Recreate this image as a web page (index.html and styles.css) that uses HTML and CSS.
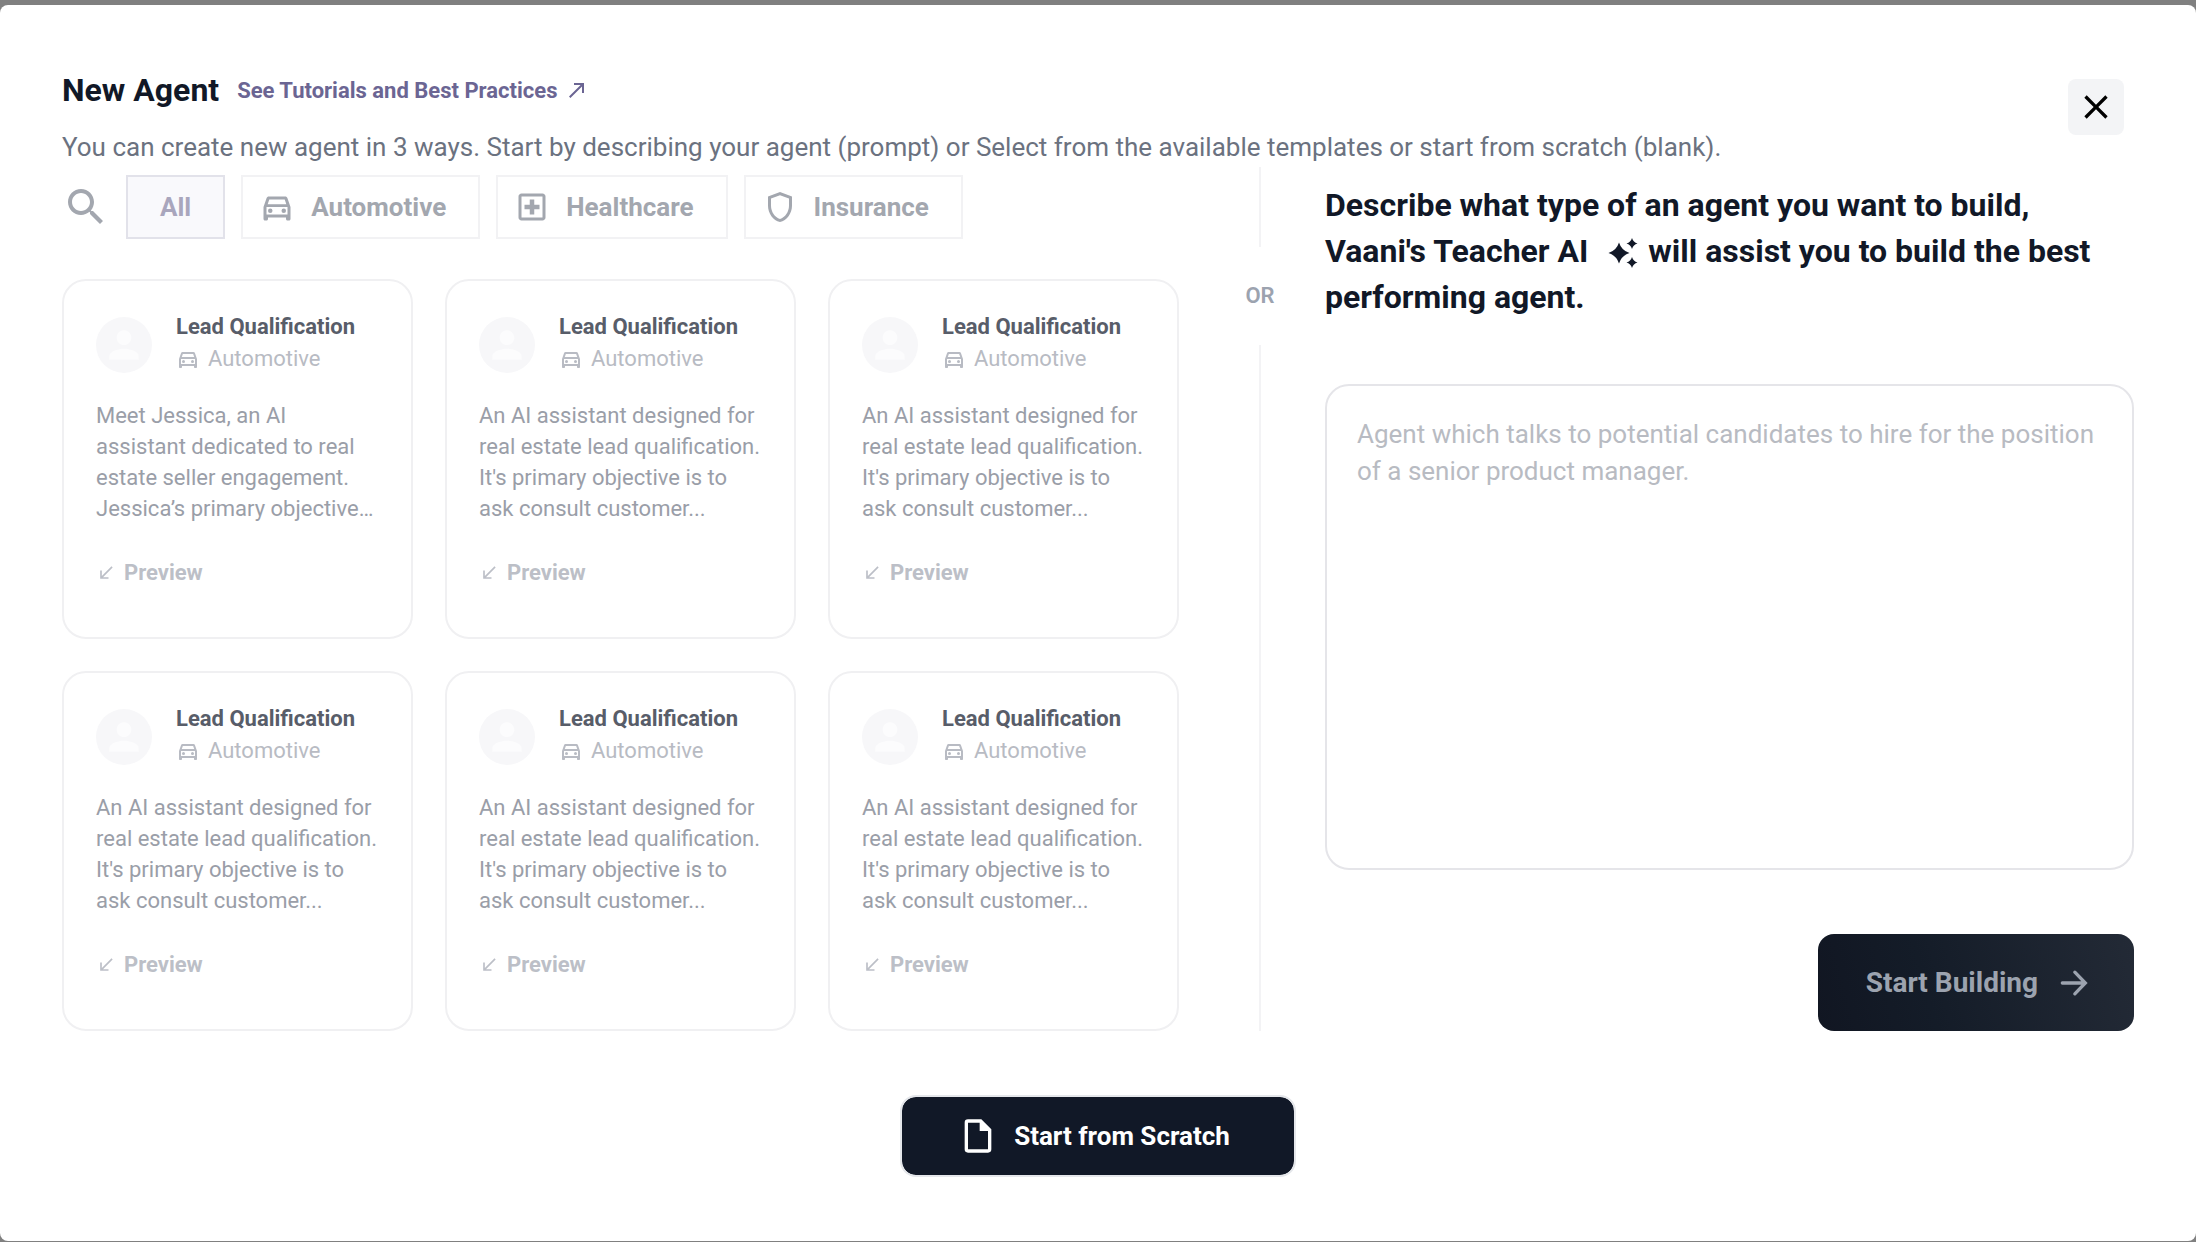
FILE: index.html
```html
<!DOCTYPE html>
<html lang="en">
<head>
<meta charset="utf-8">
<meta name="viewport" content="width=device-width, initial-scale=1">
<title>New Agent</title>
<link rel="stylesheet" href="styles.css">
</head>
<body>
<svg class="sprite" aria-hidden="true">
  <symbol id="car" viewBox="0 0 24 24"><path d="M18.92 6.01C18.72 5.42 18.16 5 17.5 5h-11c-.66 0-1.21.42-1.42 1.01L3 12v8c0 .55.45 1 1 1h1c.55 0 1-.45 1-1v-1h12v1c0 .55.45 1 1 1h1c.55 0 1-.45 1-1v-8zM6.85 7h10.29l1.08 3.11H5.77zM19 17H5v-5h14z"/><circle cx="7.5" cy="14.5" r="1.5"/><circle cx="16.5" cy="14.5" r="1.5"/></symbol>
  <symbol id="person" viewBox="0 0 24 24"><path d="M12 12c2.21 0 4-1.79 4-4s-1.79-4-4-4-4 1.79-4 4 1.79 4 4 4zm0 2c-2.67 0-8 1.34-8 4v2h16v-2c0-2.66-5.33-4-8-4z"/></symbol>
  <symbol id="expand" viewBox="0 0 24 24"><path d="M20 5.41 18.59 4 7 15.59V9H5v10h10v-2H8.41z"/></symbol>
</svg>

<main class="dialog" role="dialog" aria-labelledby="dialog-title">
  <header class="header">
    <div class="heading">
      <div class="title-row">
        <h1 class="title" id="dialog-title">New Agent</h1>
        <a class="tutorials" href="#tutorials">See Tutorials and Best Practices
          <svg class="icon-24" viewBox="0 0 24 24" aria-hidden="true"><path d="M9 5v2h6.59L4 18.59 5.41 20 17 8.41V15h2V5z"/></svg>
        </a>
      </div>
      <p class="subtitle">You can create new agent in 3 ways. Start by describing your agent (prompt) or Select from the available templates or start from scratch (blank).</p>
    </div>
    <button class="close" type="button" aria-label="Close">
      <svg class="icon-40" viewBox="0 0 24 24" aria-hidden="true"><path d="M19 6.41 17.59 5 12 10.59 6.41 5 5 6.41 10.59 12 5 17.59 6.41 19 12 13.41 17.59 19 19 17.59 13.41 12z"/></svg>
    </button>
  </header>

  <div class="body">
    <section class="templates" aria-label="Templates">
      <div class="filters">
        <button class="search" type="button" aria-label="Search templates">
          <svg class="icon-48" viewBox="0 0 24 24" aria-hidden="true"><path d="M15.5 14h-.79l-.28-.27C15.41 12.59 16 11.11 16 9.5 16 5.91 13.09 3 9.5 3S3 5.91 3 9.5 5.91 16 9.5 16c1.61 0 3.09-.59 4.23-1.57l.27.28v.79l5 4.99L20.49 19zm-6 0C7.01 14 5 11.99 5 9.5S7.01 5 9.5 5 14 7.01 14 9.5 11.99 14 9.5 14z"/></svg>
        </button>
        <button class="filter filter-active" type="button" aria-pressed="true">All</button>
        <button class="filter filter-icon" type="button"><svg class="icon-36" aria-hidden="true"><use href="#car"/></svg>Automotive</button>
        <button class="filter filter-icon" type="button"><svg class="icon-36" viewBox="0 0 24 24" aria-hidden="true"><path d="M19 3H5c-1.1 0-2 .9-2 2v14c0 1.1.9 2 2 2h14c1.1 0 2-.9 2-2V5c0-1.1-.9-2-2-2zm0 16H5V5h14zM10.5 17h3v-3.5H17v-3h-3.500V7h-3v3.500H7v3h3.500z"/></svg>Healthcare</button>
        <button class="filter filter-icon" type="button"><svg class="icon-36" viewBox="0 0 24 24" aria-hidden="true"><path d="M12 2 4 5v6.090c0 5.050 3.410 9.760 8 10.910 4.590-1.150 8-5.860 8-10.910V5zm6 9.090c0 4-2.550 7.700-6 8.830-3.450-1.130-6-4.820-6-8.830v-4.700l6-2.250 6 2.250z"/></svg>Insurance</button>
      </div>

      <div class="cards">
        <article class="card">
          <div class="card-head">
            <span class="avatar"><svg class="icon-44" aria-hidden="true"><use href="#person"/></svg></span>
            <div>
              <h2 class="card-title">Lead Qualification</h2>
              <p class="category"><svg class="icon-24" aria-hidden="true"><use href="#car"/></svg>Automotive</p>
            </div>
          </div>
          <p class="description">Meet Jessica, an AI assistant dedicated to real estate seller engagement. Jessica’s primary objective…</p>
          <button class="preview" type="button"><svg class="icon-20" aria-hidden="true"><use href="#expand"/></svg>Preview</button>
        </article>
        <article class="card">
          <div class="card-head">
            <span class="avatar"><svg class="icon-44" aria-hidden="true"><use href="#person"/></svg></span>
            <div>
              <h2 class="card-title">Lead Qualification</h2>
              <p class="category"><svg class="icon-24" aria-hidden="true"><use href="#car"/></svg>Automotive</p>
            </div>
          </div>
          <p class="description">An AI assistant designed for real estate lead qualification. It's primary objective is to ask consult customer...</p>
          <button class="preview" type="button"><svg class="icon-20" aria-hidden="true"><use href="#expand"/></svg>Preview</button>
        </article>
        <article class="card">
          <div class="card-head">
            <span class="avatar"><svg class="icon-44" aria-hidden="true"><use href="#person"/></svg></span>
            <div>
              <h2 class="card-title">Lead Qualification</h2>
              <p class="category"><svg class="icon-24" aria-hidden="true"><use href="#car"/></svg>Automotive</p>
            </div>
          </div>
          <p class="description">An AI assistant designed for real estate lead qualification. It's primary objective is to ask consult customer...</p>
          <button class="preview" type="button"><svg class="icon-20" aria-hidden="true"><use href="#expand"/></svg>Preview</button>
        </article>
        <article class="card">
          <div class="card-head">
            <span class="avatar"><svg class="icon-44" aria-hidden="true"><use href="#person"/></svg></span>
            <div>
              <h2 class="card-title">Lead Qualification</h2>
              <p class="category"><svg class="icon-24" aria-hidden="true"><use href="#car"/></svg>Automotive</p>
            </div>
          </div>
          <p class="description">An AI assistant designed for real estate lead qualification. It's primary objective is to ask consult customer...</p>
          <button class="preview" type="button"><svg class="icon-20" aria-hidden="true"><use href="#expand"/></svg>Preview</button>
        </article>
        <article class="card">
          <div class="card-head">
            <span class="avatar"><svg class="icon-44" aria-hidden="true"><use href="#person"/></svg></span>
            <div>
              <h2 class="card-title">Lead Qualification</h2>
              <p class="category"><svg class="icon-24" aria-hidden="true"><use href="#car"/></svg>Automotive</p>
            </div>
          </div>
          <p class="description">An AI assistant designed for real estate lead qualification. It's primary objective is to ask consult customer...</p>
          <button class="preview" type="button"><svg class="icon-20" aria-hidden="true"><use href="#expand"/></svg>Preview</button>
        </article>
        <article class="card">
          <div class="card-head">
            <span class="avatar"><svg class="icon-44" aria-hidden="true"><use href="#person"/></svg></span>
            <div>
              <h2 class="card-title">Lead Qualification</h2>
              <p class="category"><svg class="icon-24" aria-hidden="true"><use href="#car"/></svg>Automotive</p>
            </div>
          </div>
          <p class="description">An AI assistant designed for real estate lead qualification. It's primary objective is to ask consult customer...</p>
          <button class="preview" type="button"><svg class="icon-20" aria-hidden="true"><use href="#expand"/></svg>Preview</button>
        </article>
      </div>
    </section>

    <div class="divider"><span class="or">OR</span></div>

    <form class="prompt">
      <label class="prompt-label" for="agent-prompt">Describe what type of an agent you want to build, Vaani's Teacher AI <svg class="sparkle" viewBox="0 0 30 30" aria-hidden="true"><path d="M11 4.500Q13.500 12.500 21.500 15 13.500 17.500 11 25.500 8.500 17.500.5 15 8.500 12.500 11 4.500zM24 0Q25.300 4.200 29.500 5.500 25.300 6.800 24 11 22.700 6.800 18.500 5.500 22.700 4.200 24 0zM24 19Q25.300 23.200 29.500 24.500 25.300 25.800 24 30 22.700 25.800 18.500 24.500 22.700 23.200 24 19z"/></svg> will assist you to build the best performing agent.</label>
      <textarea class="prompt-input" id="agent-prompt" placeholder="Agent which talks to potential candidates to hire for the position of a senior product manager."></textarea>
      <button class="build" type="button">Start Building
        <svg class="icon-40 icon-line" viewBox="0 0 24 24" aria-hidden="true"><path d="M5 12h13.500M12.500 5.500 18.800 12l-6.300 6.500"/></svg>
      </button>
    </form>
  </div>

  <button class="scratch" type="button">
    <svg class="icon-40" viewBox="0 0 24 24" aria-hidden="true"><path fill-rule="evenodd" d="M6 2a2 2 0 0 0-2 2v16a2 2 0 0 0 2 2h12a2 2 0 0 0 2-2V8l-6-6zM6 20V4h7v5h5v11z"/></svg>
    Start from Scratch
  </button>
</main>
</body>
</html>
```
FILE: styles.css
```css
* {
  box-sizing: border-box;
}

body {
  display: flex;
  flex-direction: column;
  min-height: 100vh;
  margin: 0;
  padding: 5px 0 1px;
  background: #808080;
  color: #111827;
  font-family: Roboto, "Liberation Sans", sans-serif;
  font-size: 22px;
}

h1,
h2,
p {
  margin: 0;
}

button {
  display: flex;
  align-items: center;
  padding: 0;
  border: 0;
  background: none;
  color: inherit;
  font: inherit;
  font-weight: 700;
}

svg {
  flex: none;
  fill: currentColor;
}

.sprite {
  position: absolute;
  width: 0;
  height: 0;
}

.icon-20 { width: 20px; height: 20px; }
.icon-24 { width: 24px; height: 24px; }
.icon-36 { width: 36px; height: 36px; }
.icon-40 { width: 40px; height: 40px; }
.icon-44 { width: 44px; height: 44px; }
.icon-48 { width: 48px; height: 48px; }

.icon-line {
  fill: none;
  stroke: currentColor;
  stroke-width: 2;
  stroke-linecap: round;
}

.dialog {
  display: flex;
  flex: 1;
  flex-direction: column;
  padding: 62px 62px 64px;
  border-radius: 8px;
  background: #fff;
}

/* Header */
.header {
  display: flex;
  align-items: flex-start;
  justify-content: space-between;
}

.title-row {
  display: flex;
  align-items: center;
  gap: 18px;
}

.title {
  font-size: 32px;
  font-weight: 700;
  line-height: 46px;
}

.tutorials {
  display: flex;
  align-items: center;
  gap: 8px;
  color: #6b6593;
  font-weight: 700;
  text-decoration: none;
}

.subtitle {
  margin-top: 16px;
  color: #6b7280;
  font-size: 26px;
  line-height: 36px;
}

.close {
  margin: 12px 10px 0 0;
  padding: 8px;
  border-radius: 8px;
  background: #f3f4f6;
  color: #000;
}

/* Three-part body */
.body {
  display: grid;
  flex: 1;
  grid-template-columns: 1117fr 146fr 809fr;
  margin-top: 2px;
}

.templates {
  display: flex;
  flex-direction: column;
  gap: 40px;
  padding-top: 8px;
}

.filters {
  display: flex;
  gap: 16px;
  color: #a3a7af;
}

.filter {
  height: 64px;
  padding: 0 32px;
  border: 2px solid #f2f2f4;
  font-size: 26px;
}

.filter-icon {
  gap: 16px;
  padding-left: 16px;
}

.filter-active {
  border-color: #e2e2ea;
  background: #f9f9fc;
  color: #a9a6bd;
}

.cards {
  display: grid;
  flex: 1;
  grid-template-columns: repeat(3, 1fr);
  grid-auto-rows: 1fr;
  gap: 32px;
}

.card {
  padding: 30px 32px 0;
  border: 2px solid #f0f0f2;
  border-radius: 24px;
}

.card-head {
  display: flex;
  align-items: center;
  gap: 24px;
}

.avatar {
  display: flex;
  align-items: center;
  justify-content: center;
  width: 56px;
  height: 56px;
  margin-top: 4px;
  border-radius: 50%;
  background: #f7f7f9;
  color: #fcfcfd;
}

.card-title {
  color: #585d69;
  font-size: 22px;
  font-weight: 700;
  line-height: 32px;
}

.category {
  display: flex;
  align-items: center;
  gap: 8px;
  color: #b8bbc3;
  line-height: 32px;
}

.description {
  margin-top: 25px;
  color: #9a9ea8;
  line-height: 31px;
}

.preview {
  gap: 8px;
  margin-top: 33px;
  color: #bcbfc7;
  line-height: 32px;
}

/* Divider */
.divider {
  display: flex;
  flex-direction: column;
  align-items: center;
  padding-left: 16px;
}

.divider::before,
.divider::after {
  width: 2px;
  height: 80px;
  background: #f3f3f5;
  content: "";
}

.divider::after {
  flex: 1;
}

.or {
  color: #9ca3af;
  font-weight: 600;
  line-height: 98px;
}

/* Prompt */
.prompt {
  display: flex;
  flex-direction: column;
  padding-top: 15px;
}

.prompt-label {
  font-size: 32px;
  font-weight: 700;
  line-height: 46px;
}

.sparkle {
  width: 30px;
  height: 30px;
  margin: 0 2px 0 12px;
  vertical-align: -6px;
}

.prompt-input {
  flex: 1;
  width: 100%;
  margin-top: 64px;
  padding: 30px;
  border: 2px solid #e5e5e9;
  border-radius: 24px;
  outline: 0;
  background: #fff;
  font: inherit;
  font-size: 26px;
  line-height: 37px;
  resize: none;
}

.prompt-input::placeholder {
  color: #b8bbc2;
}

.build {
  align-self: flex-end;
  gap: 16px;
  height: 97px;
  margin-top: 64px;
  padding: 0 40px 0 48px;
  border-radius: 16px;
  background: linear-gradient(75deg, #111622, #141c28 35%, #232a36);
  color: #9ca3af;
  font-size: 28px;
}

.scratch {
  align-self: center;
  gap: 16px;
  height: 82px;
  margin-top: 64px;
  padding: 0 64px 0 56px;
  border: 2px solid #e5e7eb;
  border-radius: 16px;
  background: #111827;
  background-clip: padding-box;
  color: #fff;
  font-size: 26px;
}
```
